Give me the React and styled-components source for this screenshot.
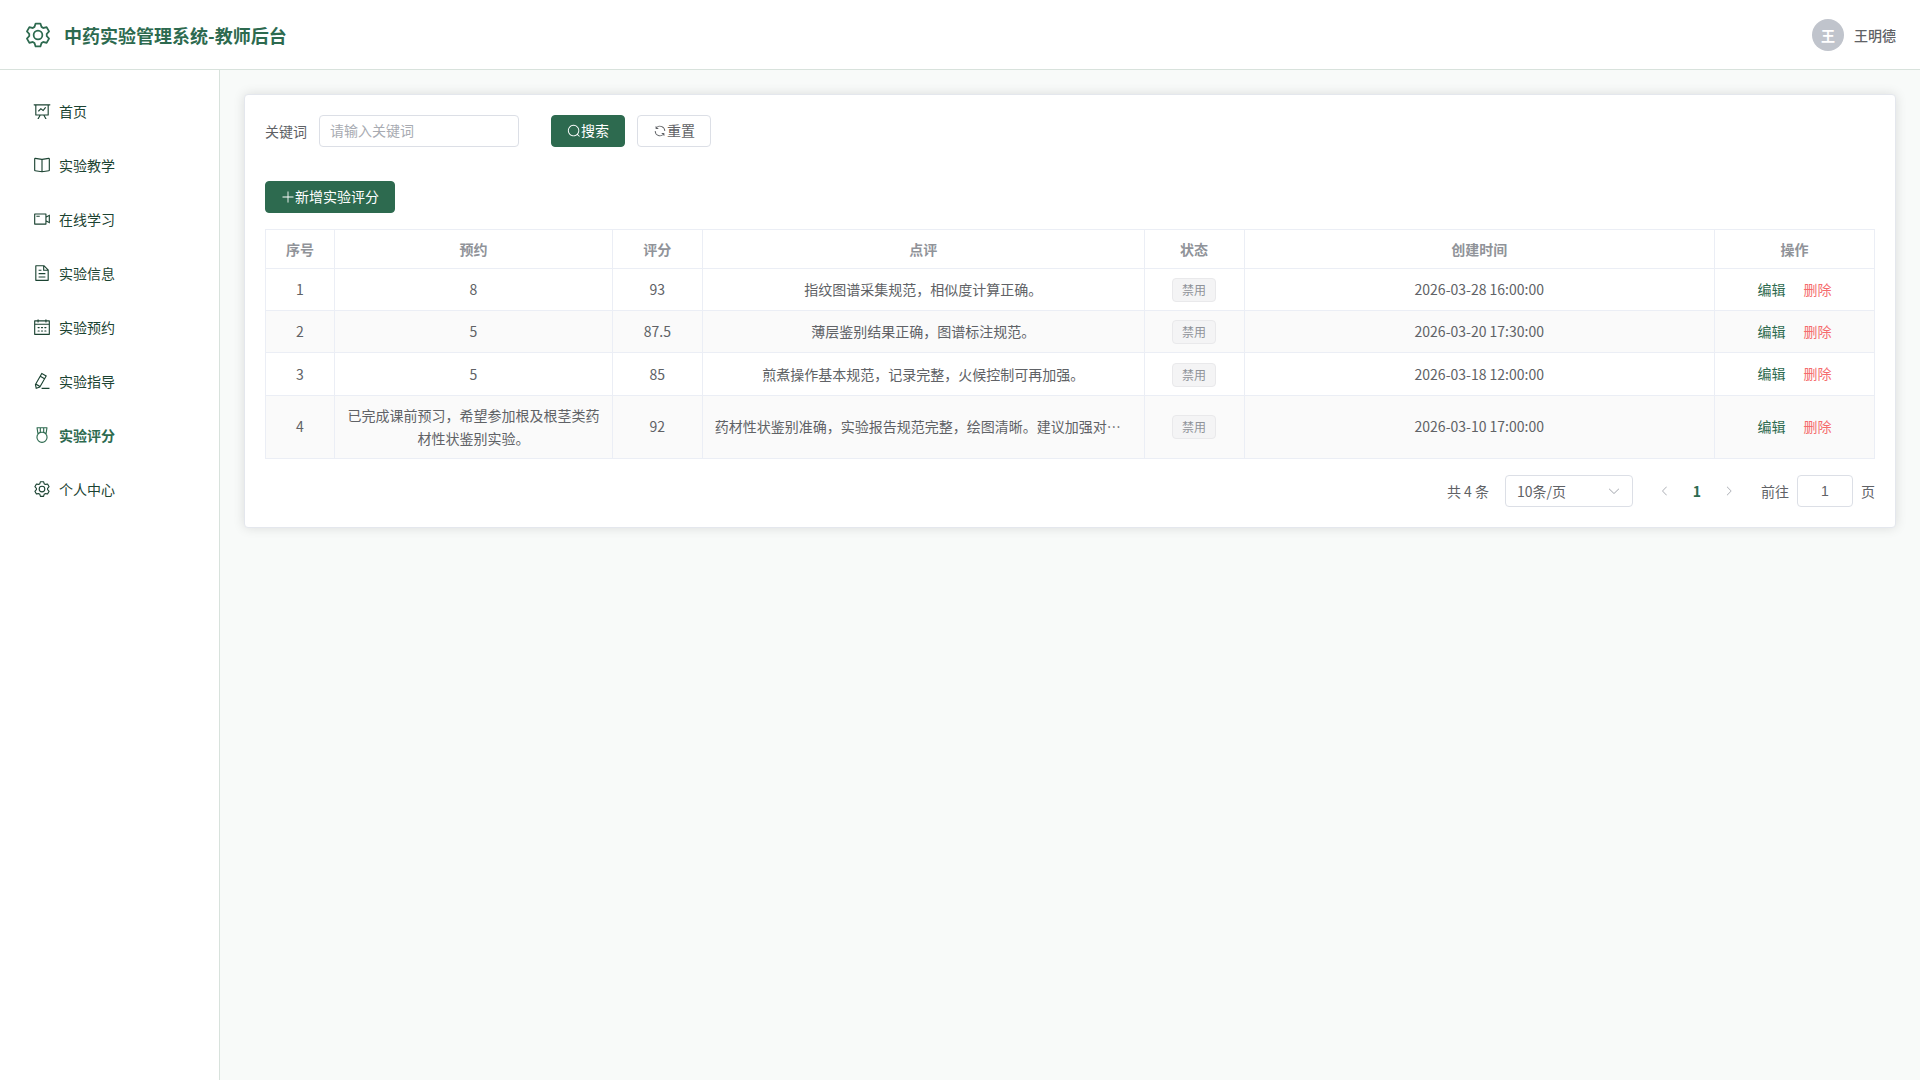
import React, { useState } from "react";
import styled, { createGlobalStyle } from "styled-components";

const ICONS = {
  setting:
    "M600.704 64a32 32 0 0 1 30.464 22.208l35.2 109.376c14.784 7.232 28.928 15.36 42.432 24.512l112.384-24.192a32 32 0 0 1 34.432 15.36L944.32 364.8a32 32 0 0 1-4.032 37.504l-77.12 85.12a357.12 357.12 0 0 1 0 49.024l77.12 85.248a32 32 0 0 1 4.032 37.504l-88.704 153.6a32 32 0 0 1-34.432 15.296L708.8 803.904c-13.44 9.088-27.648 17.28-42.368 24.512l-35.264 109.376A32 32 0 0 1 600.704 960H423.296a32 32 0 0 1-30.464-22.208L357.696 828.48a351.616 351.616 0 0 1-42.56-24.64l-112.32 24.256a32 32 0 0 1-34.432-15.36L79.68 659.2a32 32 0 0 1 4.032-37.504l77.12-85.248a357.12 357.12 0 0 1 0-48.896l-77.12-85.248A32 32 0 0 1 79.68 364.8l88.704-153.6a32 32 0 0 1 34.432-15.296l112.32 24.256c13.568-9.152 27.776-17.408 42.56-24.64l35.2-109.312A32 32 0 0 1 423.232 64H600.64zm-23.424 64H446.72l-36.352 113.088-24.512 11.968a294.113 294.113 0 0 0-34.816 20.096l-22.656 15.36-116.224-25.088-65.28 113.152 79.68 88.192-1.92 27.136a293.12 293.12 0 0 0 0 40.192l1.92 27.136-79.808 88.192 65.344 113.152 116.224-25.024 22.656 15.296a294.113 294.113 0 0 0 34.816 20.096l24.512 11.968L446.72 896h130.688l36.48-113.152 24.448-11.904a288.282 288.282 0 0 0 34.752-20.096l22.592-15.296 116.288 25.024 65.28-113.152-79.744-88.192 1.92-27.136a293.12 293.12 0 0 0 0-40.256l-1.92-27.136 79.808-88.128-65.344-113.152-116.288 24.96-22.592-15.232a287.616 287.616 0 0 0-34.752-20.096l-24.448-11.904L577.344 128zM512 320a192 192 0 1 1 0 384 192 192 0 0 1 0-384zm0 64a128 128 0 1 0 0 256 128 128 0 0 0 0-256z",
  board:
    "M359.168 768H160a32 32 0 0 1-32-32V192H64a32 32 0 0 1 0-64h896a32 32 0 1 1 0 64h-64v544a32 32 0 0 1-32 32H665.216l110.848 192h-73.856L591.36 768H433.024L322.176 960H248.32zM832 192H192v512h640zM342.656 534.656a32 32 0 1 1-45.312-45.312L444.992 341.76l125.44 94.08L679.04 300.032a32 32 0 1 1 49.92 39.936L581.632 524.224 451.008 426.24 342.656 534.592z",
  reading:
    "m512 863.36 384-54.848v-638.72L525.568 222.72a96 96 0 0 1-27.136 0L128 169.792v638.72zM137.024 106.432l370.432 52.928a32 32 0 0 0 9.088 0l370.432-52.928A64 64 0 0 1 960 169.792v638.72a64 64 0 0 1-54.976 63.36l-388.48 55.488a32 32 0 0 1-9.088 0l-388.48-55.488A64 64 0 0 1 64 808.512v-638.72a64 64 0 0 1 73.024-63.36zM480 192h64v704h-64z",
  video:
    "M704 768V256H128v512zm64-416 192-96v512l-192-96v128a32 32 0 0 1-32 32H96a32 32 0 0 1-32-32V224a32 32 0 0 1 32-32h640a32 32 0 0 1 32 32zm0 71.552v176.896l128 64V359.552zM192 320h192v64H192z",
  document:
    "M832 384H576V128H192v768h640zm-26.496-64L640 154.496V320zM160 64h480l256 256v608a32 32 0 0 1-32 32H160a32 32 0 0 1-32-32V96a32 32 0 0 1 32-32m160 448h384v64H320zm0-192h160v64H320zm0 384h384v64H320z",
  calendar:
    "M128 384v512h768V192H768v32a32 32 0 1 1-64 0v-32H320v32a32 32 0 0 1-64 0v-32H128v128h768v64zm192-256h384V96a32 32 0 1 1 64 0v32h160a32 32 0 0 1 32 32v768a32 32 0 0 1-32 32H96a32 32 0 0 1-32-32V160a32 32 0 0 1 32-32h160V96a32 32 0 0 1 64 0zm-32 384h64a32 32 0 0 1 0 64h-64a32 32 0 0 1 0-64m0 192h64a32 32 0 1 1 0 64h-64a32 32 0 1 1 0-64m192-192h64a32 32 0 0 1 0 64h-64a32 32 0 0 1 0-64m0 192h64a32 32 0 1 1 0 64h-64a32 32 0 1 1 0-64m192-192h64a32 32 0 1 1 0 64h-64a32 32 0 1 1 0-64m0 192h64a32 32 0 1 1 0 64h-64a32 32 0 1 1 0-64",
  pen: "m199.04 672.64 193.984 112 224-387.968-193.92-112-224 388.032zm-23.872 60.16 32.896 148.288 144.896-45.696L175.168 732.8zM455.04 229.248l193.92 112 56.704-98.112-193.984-112-56.64 98.112zM104.32 708.8l384-665.024 304.768 175.936L409.152 884.8h.064l-248.448 78.336L104.32 708.8zm384 254.272v-64h448v64h-448z",
  medal:
    "M512 896a256 256 0 1 0 0-512 256 256 0 0 0 0 512m0 64a320 320 0 1 1 0-640 320 320 0 0 1 0 640M576 128H448v200a286.72 286.72 0 0 1 64-8c19.52 0 40.832 2.688 64 8zm64 0v219.648c24.448 9.088 50.56 20.416 78.4 33.92L757.44 128zm-256 0H266.624l39.04 253.568c27.84-13.504 53.888-24.832 78.336-33.92V128zM229.312 64h565.376a32 32 0 0 1 31.616 36.864L768 480c-113.792-64-199.104-96-256-96-56.896 0-142.208 32-256 96l-58.304-379.136A32 32 0 0 1 229.312 64",
  search:
    "m795.904 750.72 124.992 124.928a32 32 0 0 1-45.248 45.248L750.656 795.904a416 416 0 1 1 45.248-45.248zM480 832a352 352 0 1 0 0-704 352 352 0 0 0 0 704",
  refresh:
    "M771.776 794.88A384 384 0 0 1 128 512h64a320 320 0 0 0 555.712 216.448H654.72a32 32 0 1 1 0-64h149.056a32 32 0 0 1 32 32v148.928a32 32 0 1 1-64 0v-50.56zM276.288 295.616h92.992a32 32 0 0 1 0 64H220.16a32 32 0 0 1-32-32V178.56a32 32 0 0 1 64 0v50.56A384 384 0 0 1 896.128 512h-64a320 320 0 0 0-555.776-216.384z",
  plus: "M480 480V128a32 32 0 0 1 64 0v352h352a32 32 0 1 1 0 64H544v352a32 32 0 1 1-64 0V544H128a32 32 0 0 1 0-64z",
  down: "M831.872 340.864 512 652.672 192.128 340.864a30.592 30.592 0 0 0-42.752 0 29.12 29.12 0 0 0 0 41.6L489.664 714.24a32 32 0 0 0 44.672 0l340.288-331.712a29.12 29.12 0 0 0 0-41.728 30.592 30.592 0 0 0-42.752 0z",
  left: "M609.408 149.376 277.76 489.6a32 32 0 0 0 0 44.672l331.648 340.352a29.12 29.12 0 0 0 41.728 0 30.592 30.592 0 0 0 0-42.752L339.264 511.936l311.872-319.872a30.592 30.592 0 0 0 0-42.688 29.12 29.12 0 0 0-41.728 0z",
  right:
    "M340.864 149.312a30.592 30.592 0 0 0 0 42.752L652.736 512 340.864 831.872a30.592 30.592 0 0 0 0 42.752 29.12 29.12 0 0 0 41.728 0L714.24 534.336a32 32 0 0 0 0-44.672L382.592 149.376a29.12 29.12 0 0 0-41.728 0z",
};

const menus = [
  { name: "首页", icon: "board" },
  { name: "实验教学", icon: "reading" },
  { name: "在线学习", icon: "video" },
  { name: "实验信息", icon: "document" },
  { name: "实验预约", icon: "calendar" },
  { name: "实验指导", icon: "pen" },
  { name: "实验评分", icon: "medal" },
  { name: "个人中心", icon: "setting" },
];

const scores = [
  {
    id: 1,
    booking: "8",
    score: "93",
    comment: "指纹图谱采集规范，相似度计算正确。",
    time: "2026-03-28 16:00:00",
  },
  {
    id: 2,
    booking: "5",
    score: "87.5",
    comment: "薄层鉴别结果正确，图谱标注规范。",
    time: "2026-03-20 17:30:00",
  },
  {
    id: 3,
    booking: "5",
    score: "85",
    comment: "煎煮操作基本规范，记录完整，火候控制可再加强。",
    time: "2026-03-18 12:00:00",
  },
  {
    id: 4,
    booking: "已完成课前预习，希望参加根及根茎类药材性状鉴别实验。",
    score: "92",
    comment: "药材性状鉴别准确，实验报告规范完整，绘图清晰。建议加强对…",
    time: "2026-03-10 17:00:00",
  },
];

const Icon = ({ name, size = 14 }) => (
  <Svg viewBox="0 0 1024 1024" width={size} height={size} aria-hidden="true">
    <path d={ICONS[name]} />
  </Svg>
);

export default function App() {
  const [active, setActive] = useState("实验评分");
  const [keyword, setKeyword] = useState("");
  const [page, setPage] = useState("1");

  return (
    <PAGE lang="zh-CN">
      <GlobalStyle />
      <HEADER>
        <BRAND>
          <Icon name="setting" size={28} />
          <TITLE>中药实验管理系统-教师后台</TITLE>
        </BRAND>
        <USER>
          <AVATAR>王</AVATAR>
          <USERNAME>王明德</USERNAME>
        </USER>
      </HEADER>
      <BODY>
        <SIDEBAR>
          {menus.map((item) => (
            <MENUITEM
              key={item.name}
              href="#"
              $active={item.name === active}
              onClick={() => setActive(item.name)}
            >
              <MENUICON>
                <Icon name={item.icon} size={18} />
              </MENUICON>
              {item.name}
            </MENUITEM>
          ))}
        </SIDEBAR>
        <MAIN>
          <CARD>
            <SEARCHFORM onSubmit={(e) => e.preventDefault()}>
              <LABEL htmlFor="keyword">关键词</LABEL>
              <KEYWORD
                id="keyword"
                type="text"
                placeholder="请输入关键词"
                value={keyword}
                onChange={(e) => setKeyword(e.target.value)}
              />
              <BUTTONS>
                <Button type="submit" $primary>
                  <Icon name="search" />
                  搜索
                </Button>
                <Button type="button" onClick={() => setKeyword("")}>
                  <Icon name="refresh" />
                  重置
                </Button>
              </BUTTONS>
            </SEARCHFORM>
            <Button type="button" $primary>
              <Icon name="plus" />
              新增实验评分
            </Button>

            {/* table starts */}
            <Table>
              <colgroup>
                <Col $width="69px" />
                <Col $width="17.27%" />
                <Col $width="90px" />
                <Col $width="27.45%" />
                <Col $width="100px" />
                <Col />
                <Col $width="160px" />
              </colgroup>
              <thead>
                <tr>
                  <Th>序号</Th>
                  <Th>预约</Th>
                  <Th>评分</Th>
                  <Th>点评</Th>
                  <Th>状态</Th>
                  <Th>创建时间</Th>
                  <Th>操作</Th>
                </tr>
              </thead>
              <tbody>
                {scores.map((row) => (
                  <Tr key={row.id}>
                    <Td>{row.id}</Td>
                    <Td>{row.booking}</Td>
                    <Td>{row.score}</Td>
                    <Td>
                      <ONELINE $cut={row.comment.endsWith("…")}>
                        {row.comment}
                      </ONELINE>
                    </Td>
                    <Td>
                      <TAG>禁用</TAG>
                    </Td>
                    <Td>{row.time}</Td>
                    <Td>
                      <ACTIONS>
                        <LinkButton type="button">编辑</LinkButton>
                        <LinkButton type="button" $danger>
                          删除
                        </LinkButton>
                      </ACTIONS>
                    </Td>
                  </Tr>
                ))}
              </tbody>
            </Table>
            {/* table ends */}

            <PAGINATION>
              <span>共 4 条</span>
              <SELECTBOX>
                <SELECT aria-label="每页条数" defaultValue="10">
                  <option value="10">10条/页</option>
                </SELECT>
                <Icon name="down" />
              </SELECTBOX>
              <PAGER>
                <PageButton type="button" aria-label="上一页" disabled>
                  <Icon name="left" size={12} />
                </PageButton>
                <PageButton type="button" $current>
                  1
                </PageButton>
                <PageButton type="button" aria-label="下一页" disabled>
                  <Icon name="right" size={12} />
                </PageButton>
              </PAGER>
              <JUMP>
                前往
                <JUMPINPUT
                  type="text"
                  value={page}
                  onChange={(e) => setPage(e.target.value)}
                />
                页
              </JUMP>
            </PAGINATION>
          </CARD>
        </MAIN>
      </BODY>
    </PAGE>
  );
}

const GlobalStyle = createGlobalStyle`
  * {
    box-sizing: border-box;
  }
  body {
    margin: 0;
    font-family: "Noto Sans CJK SC", sans-serif;
    font-size: 14px;
    color: #606266;
  }
  button, input, select {
    font: inherit;
    color: inherit;
  }
`;
const Svg = styled.svg`
  display: block;
  flex-shrink: 0;
  fill: currentColor;
`;
const PAGE = styled.div`
  display: flex;
  flex-direction: column;
  min-height: 100vh;
  background-color: #f8faf9;
`;
const HEADER = styled.header`
  display: flex;
  align-items: center;
  justify-content: space-between;
  height: 70px;
  padding: 0 24px;
  background-color: #fff;
  border-bottom: 1px solid #d8e2dc;
`;
const BRAND = styled.div`
  display: flex;
  align-items: center;
  gap: 12px;
  color: #2d6a4f;
`;
const TITLE = styled.h1`
  margin: 0;
  font-size: 18px;
  font-weight: 700;
`;
const USER = styled.div`
  display: flex;
  align-items: center;
  gap: 10px;
`;
const AVATAR = styled.span`
  display: flex;
  align-items: center;
  justify-content: center;
  width: 32px;
  height: 32px;
  border-radius: 50%;
  font-weight: 700;
  color: #fff;
  background-color: #c0c4cc;
`;
const USERNAME = styled.span`
  font-weight: 500;
`;
const BODY = styled.div`
  display: flex;
  flex: 1;
`;
const SIDEBAR = styled.nav`
  display: flex;
  flex-direction: column;
  flex-shrink: 0;
  gap: 4px;
  width: 220px;
  padding: 16px 10px;
  background-color: #fff;
  border-right: 1px solid #d8e2dc;
`;
const MENUITEM = styled.a`
  display: flex;
  align-items: center;
  gap: 5px;
  height: 50px;
  padding: 0 20px;
  text-decoration: none;
  color: ${(props) => (props.$active ? "#2d6a4f" : "#1b4332")};
  font-weight: ${(props) => (props.$active ? 700 : 400)};
`;
const MENUICON = styled.span`
  display: flex;
  justify-content: center;
  width: 24px;
`;
const MAIN = styled.main`
  flex: 1;
  min-width: 0;
  padding: 24px;
`;
const CARD = styled.section`
  padding: 20px;
  background-color: #fff;
  border: 1px solid #e4e7ed;
  border-radius: 4px;
  box-shadow: 0 0 12px rgba(0, 0, 0, 0.12);
`;
const SEARCHFORM = styled.form`
  display: flex;
  align-items: center;
  margin-bottom: 34px;
`;
const LABEL = styled.label`
  padding-right: 12px;
`;
const Input = styled.input`
  height: 32px;
  padding: 0 10px;
  font-family: "Liberation Sans", "Noto Sans CJK SC", sans-serif;
  background-color: #fff;
  border: 1px solid #dcdfe6;
  border-radius: 4px;
  outline: none;
  &::placeholder {
    color: #a8abb2;
  }
`;
const KEYWORD = styled(Input)`
  width: 200px;
  margin-right: 32px;
`;
const BUTTONS = styled.div`
  display: flex;
  gap: 12px;
`;
const Button = styled.button`
  display: inline-flex;
  align-items: center;
  height: 32px;
  padding: 0 15px;
  font-family: "Liberation Sans", "Noto Sans CJK SC", sans-serif;
  line-height: 1;
  color: ${(props) => (props.$primary ? "#fff" : "#606266")};
  background-color: ${(props) => (props.$primary ? "#2d6a4f" : "#fff")};
  border: 1px solid ${(props) => (props.$primary ? "#2d6a4f" : "#dcdfe6")};
  border-radius: 4px;
  cursor: pointer;
`;
const Table = styled.table`
  width: 100%;
  margin-top: 16px;
  table-layout: fixed;
  border-collapse: separate;
  border-spacing: 0;
  border-top: 1px solid #ebeef5;
  border-left: 1px solid #ebeef5;
  text-align: center;
  line-height: 23px;
`;
const Col = styled.col`
  width: ${(props) => props.$width || "auto"};
`;
const Th = styled.th`
  height: 39px;
  padding: 0 12px;
  color: #909399;
  border-right: 1px solid #ebeef5;
  border-bottom: 1px solid #ebeef5;
`;
const Tr = styled.tr`
  &:nth-child(even) {
    background-color: #fafafa;
  }
`;
const Td = styled.td`
  padding: 8px 12px;
  border-right: 1px solid #ebeef5;
  border-bottom: 1px solid #ebeef5;
`;
const ONELINE = styled.div`
  overflow: hidden;
  white-space: nowrap;
  text-overflow: ellipsis;
  text-align: ${(props) => (props.$cut ? "left" : "center")};
`;
const TAG = styled.span`
  display: inline-flex;
  align-items: center;
  height: 24px;
  padding: 0 9px;
  font-size: 12px;
  line-height: 1;
  vertical-align: middle;
  color: #909399;
  background-color: #f4f4f5;
  border: 1px solid #e9e9eb;
  border-radius: 4px;
`;
const ACTIONS = styled.div`
  display: flex;
  justify-content: center;
  gap: 14px;
`;
const LinkButton = styled.button`
  padding: 2px;
  font-family: "Liberation Sans", "Noto Sans CJK SC", sans-serif;
  line-height: 1;
  color: ${(props) => (props.$danger ? "#f56c6c" : "#2d6a4f")};
  background: none;
  border: none;
  cursor: pointer;
`;
const PAGINATION = styled.div`
  display: flex;
  align-items: center;
  justify-content: flex-end;
  gap: 16px;
  margin-top: 16px;
`;
const SELECTBOX = styled.div`
  display: grid;
  grid-template-columns: 102px 14px;
  align-items: center;
  width: 128px;
  color: #a8abb2;
  svg {
    grid-area: 1 / 2;
    pointer-events: none;
  }
`;
const SELECT = styled.select`
  grid-area: 1 / 1;
  width: 128px;
  height: 32px;
  padding: 0 11px;
  color: #606266;
  background-color: #fff;
  border: 1px solid #dcdfe6;
  border-radius: 4px;
  appearance: none;
`;
const PAGER = styled.div`
  display: flex;
`;
const PageButton = styled.button`
  display: flex;
  align-items: center;
  justify-content: center;
  width: 32px;
  height: 32px;
  padding: 0;
  font-weight: ${(props) => (props.$current ? 700 : 400)};
  color: ${(props) => (props.$current ? "#2d6a4f" : "#a8abb2")};
  background: none;
  border: none;
`;
const JUMP = styled.label`
  display: flex;
  align-items: center;
  gap: 8px;
`;
const JUMPINPUT = styled(Input)`
  width: 56px;
  text-align: center;
`;
